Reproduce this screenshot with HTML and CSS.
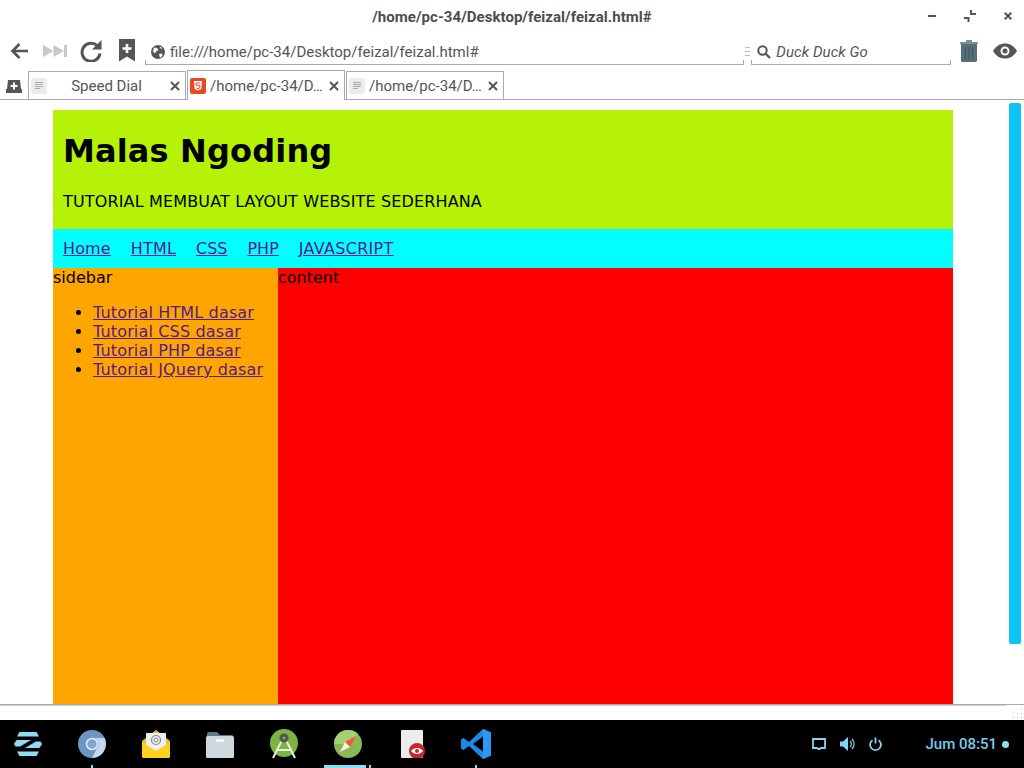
FILE: index.html
```html
<!DOCTYPE html>
<html lang="id">
<head>
<meta charset="utf-8">
<title>feizal</title>
<link rel="stylesheet" href="styles.css">
</head>
<body>
<div class="app">
  <div class="titlebar">
    <span class="title">/home/pc-34/Desktop/feizal/feizal.html#</span>
    <div class="winbtns">
      <svg class="wb w8" viewBox="0 0 8 12"><rect x="0" y="5" width="8" height="2" fill="#555"/></svg>
      <svg class="wb" viewBox="0 0 12 12"><path d="M6 0h2v3h4v2H6zM0 7h5.500v5h-2V9H0z" fill="#555"/></svg>
      <svg class="wb w8" viewBox="0 0 8 12"><path d="M.7 2.700l6.600 6.600M7.300 2.700L.7 9.300" stroke="#555" stroke-width="2"/></svg>
    </div>
  </div>
  <div class="toolbar">
    <svg class="tool back" viewBox="0 0 18 18"><path d="M18 9H3M9.500 2L2.500 9l7 7" fill="none" stroke="#555" stroke-width="2.700"/></svg>
    <svg class="tool ffw" viewBox="0 0 24 12"><path d="M0 0l10.500 6L0 12zM10.500 0L21 6l-10.500 6z" fill="#c8c8c8"/><rect x="21" y="0" width="3" height="12" fill="#c8c8c8"/></svg>
    <svg class="tool reload" viewBox="0 0 22 22"><path d="M17.500 6A9 9 0 1 0 20 13.500" fill="none" stroke="#555" stroke-width="3"/><path d="M21.500 0v9.500H12z" fill="#555"/></svg>
    <svg class="tool mark" viewBox="0 0 16 23"><path d="M0 0h16v22.500l-8-5-8 5z" fill="#555"/><path d="M6.700 5h2.600v3.200h3.200v2.600H9.300V14H6.700v-3.200H3.500V8.200h3.200z" fill="#fff"/></svg>
    <div class="addr field">
      <svg class="globe" viewBox="0 0 14 14"><circle cx="7" cy="7" r="7" fill="#555"/><path d="M3 2.500l3 .5 1.500 2-2.500 1.500-1 2L2 6.500zM8 9l3-.5.500 2L9 13zM8.500 1.500l3 1.500-1.500 1z" fill="#fff"/></svg>
      <span class="url">file:///home/pc-34/Desktop/feizal/feizal.html#</span>
    </div>
    <svg class="grip" viewBox="0 0 5 9"><path d="M0 .5h5M0 4.500h5M0 8.500h5" stroke="#bbb"/></svg>
    <div class="search field">
      <svg class="lens" viewBox="0 0 14 14"><circle cx="5.500" cy="5.500" r="4.200" fill="none" stroke="#555" stroke-width="2"/><path d="M8.500 8.500l4.500 4.500" stroke="#555" stroke-width="2.200"/></svg>
      <span class="engine">Duck Duck Go</span>
    </div>
    <svg class="trash" viewBox="0 0 18 22"><path d="M0 2h18v2H0zM6 0h6v2H6z" fill="#78909c"/><path d="M1 4h16v17l-1 1H2l-1-1z" fill="#546e7a"/><path d="M5.500 7v12M9 7v12M12.500 7v12" stroke="#455a64" stroke-width="1.300"/></svg>
    <svg class="eye" viewBox="0 0 24 16"><path d="M0 8C3 3 7 .500 12 .500S21 3 24 8c-3 5-7 7.500-12 7.500S3 13 0 8z" fill="#555"/><circle cx="12" cy="8" r="4.500" fill="#fff"/><circle cx="12" cy="8" r="2.500" fill="#555"/></svg>
  </div>
  <div class="tabbar">
    <svg class="newtab" viewBox="0 0 16 13"><path d="M2 0h12l1 9h1v4H0V9h1z" fill="#555"/><path d="M7 2.500h2v2.500h2.500v2H9v2.500H7V7H4.500V5H7z" fill="#fff"/></svg>
    <div class="tab">
      <svg class="fav" viewBox="0 0 16 16"><rect width="16" height="16" rx="2" fill="#ececec"/><path d="M4 4.500h8M4 6.500h8M4 8.500h8M4 10.500h5" stroke="#aaa"/></svg>
      <span class="tabname speed">Speed Dial</span>
      <svg class="x" viewBox="0 0 10 10"><path d="M1 1l8 8M9 1L1 9" stroke="#555" stroke-width="2"/></svg>
    </div>
    <div class="tab active">
      <svg class="fav" viewBox="0 0 16 16"><rect width="16" height="16" rx="2" fill="#e8491f"/><path d="M4 3h8l-.7 8L8 12.500 4.700 11z" fill="#fff"/><path d="M10.300 5H5.900l.2 2.300h3.900l-.3 2.700L8 10.600 6.300 10" fill="none" stroke="#e8491f"/></svg>
      <span class="tabname">/home/pc-34/D…</span>
      <svg class="x" viewBox="0 0 10 10"><path d="M1 1l8 8M9 1L1 9" stroke="#555" stroke-width="2"/></svg>
    </div>
    <div class="tab">
      <svg class="fav" viewBox="0 0 16 16"><rect width="16" height="16" rx="2" fill="#ececec"/><path d="M4 4.500h8M4 6.500h8M4 8.500h8M4 10.500h5" stroke="#aaa"/></svg>
      <span class="tabname">/home/pc-34/D…</span>
      <svg class="x" viewBox="0 0 10 10"><path d="M1 1l8 8M9 1L1 9" stroke="#555" stroke-width="2"/></svg>
    </div>
  </div>
  <div class="viewport">
    <div class="page">
      <div class="wrap">
        <header class="head">
          <h1>Malas Ngoding</h1>
          <p>TUTORIAL MEMBUAT LAYOUT WEBSITE SEDERHANA</p>
        </header>
        <nav class="menu">
          <a href="#">Home</a><a href="#">HTML</a><a class="tight" href="#">CSS</a><a class="tight" href="#">PHP</a><a class="wide" href="#">JAVASCRIPT</a>
        </nav>
        <div class="cols">
          <aside class="side">
            sidebar
            <ul>
              <li><a href="#">Tutorial HTML dasar</a></li>
              <li><a href="#">Tutorial CSS dasar</a></li>
              <li><a href="#">Tutorial PHP dasar</a></li>
              <li><a href="#">Tutorial JQuery dasar</a></li>
            </ul>
          </aside>
          <main class="content">content</main>
        </div>
      </div>
    </div>
    <div class="scroll"><div class="thumb"></div></div>
  </div>
  <div class="status">
    <div class="statusline"></div>
    <svg class="sgrip" viewBox="0 0 10 10"><path d="M9 1h1v1H9zM5 5h1v1H5zM9 5h1v1H9zM1 9h1v1H1zM5 9h1v1H5zM9 9h1v1H9z" fill="#bbb"/></svg>
  </div>
  <div class="taskbar">
    <div class="task t1"><svg viewBox="0 0 28 24"><path d="M5.500 0h17L25 4.500H3zM0 12l2.500-4H17L6 14.500H1.500zM28 12l-2.500 4H11l11-6.500h4.500zM3 19.500h22L22.500 24h-17z" fill="#8fdcf5"/></svg></div>
    <div class="task t2"><svg viewBox="0 0 28 28"><circle cx="14" cy="14" r="14" fill="#6c97c4"/><path d="M14 8h12.500A14 14 0 0 1 14 28l5-10a6 6 0 0 0-5-10z" fill="#c5d9ee"/><circle cx="14" cy="14" r="5.500" fill="#7ba6d8" stroke="#e6eef8" stroke-width="1.500"/></svg><i class="dot"></i></div>
    <div class="task t3"><svg viewBox="0 0 28 28"><path d="M14 0l14 11v15a2 2 0 0 1-2 2H2a2 2 0 0 1-2-2V11z" fill="#f6bf26"/><path d="M4 3h20v15l-10 6-10-6z" fill="#eceff1"/><circle cx="14" cy="10" r="4.500" fill="none" stroke="#888" stroke-width="1.200"/><circle cx="14" cy="10" r="2" fill="none" stroke="#888"/><path d="M0 12l14 9 14-9v14a2 2 0 0 1-2 2H2a2 2 0 0 1-2-2z" fill="#fcd221"/></svg></div>
    <div class="task t4"><svg viewBox="0 0 28 28"><path d="M1 4a2 2 0 0 1 2-2h8l3 3h12a1 1 0 0 1 1 1v5H1z" fill="#5d7a88"/><rect y="6" width="28" height="22" rx="1.500" fill="#cfd8dc"/><rect x="10" y="9.500" width="8" height="2" fill="#fff"/></svg></div>
    <div class="task t5"><svg viewBox="0 0 28 30"><circle cx="14" cy="14" r="14" fill="#7cb342"/><path d="M3 29L12 11M25 29L16 11M7 21h14" fill="none" stroke="#e8f0dc" stroke-width="2"/><circle cx="14" cy="9" r="4.500" fill="#555"/><circle cx="14" cy="9" r="1.500" fill="#7cb342"/></svg></div>
    <div class="task t6"><svg viewBox="0 0 28 28"><circle cx="14" cy="14" r="14" fill="#8bb854"/><path d="M0 14A14 14 0 0 1 14 0a14 14 0 0 1 10 4L14 14z" fill="#a5cf70"/><path d="M22 6L16 17l-5-5z" fill="#f4573d"/><path d="M6 22l5-10 5 5z" fill="#f3f3f3"/></svg><i class="running"></i><i class="tick"></i></div>
    <div class="task t7"><svg viewBox="0 0 24 28"><rect x="0" y="0" width="22" height="28" rx="1" fill="#ececec"/><circle cx="16" cy="21" r="8" fill="#c62828"/><path d="M10 21c3-4 9-4 12 0-3 4-9 4-12 0z" fill="#fff"/><circle cx="16" cy="21" r="2" fill="#c62828"/></svg></div>
    <div class="task t8"><svg viewBox="0 0 30 30"><path d="M22 0l8 3.500v23L22 30 8 17l-5.500 4L0 19.500V10.500L2.500 9 8 13z" fill="#1e88e5"/><path d="M22 7.500L12 15l10 7.500z" fill="#000"/><path d="M22 0l8 3.500v23L22 30z" fill="#2a9af0"/></svg><i class="dot"></i></div>
    <div class="tray">
      <svg class="ti tscreen" viewBox="0 0 14 12"><path d="M1 1h12v9H9l-1.500 1h-1L5 10H1z" fill="none" stroke="#87d4f2" stroke-width="1.800"/></svg>
      <svg class="ti tsound" viewBox="0 0 16 14"><path d="M0 4.500h3L8 0v14L3 9.500H0z" fill="#87d4f2"/><path d="M10 4a4 4 0 0 1 0 6M12 2a7 7 0 0 1 0 10" fill="none" stroke="#87d4f2" stroke-width="1.200"/></svg>
      <svg class="ti tpower" viewBox="0 0 13 14"><path d="M3.500 3.200a5.400 5.400 0 1 0 6 0" fill="none" stroke="#87d4f2" stroke-width="1.800"/><path d="M6.500 .500v6" stroke="#87d4f2" stroke-width="1.800"/></svg>
      <span class="clock">Jum 08:51</span>
      <i class="cdot"></i>
    </div>
  </div>
</div>
</body>
</html>
```
FILE: styles.css
```css
* { box-sizing: border-box; }
html, body { margin: 0; height: 100%; overflow: hidden; background: #fff; }
.app { display: flex; flex-direction: column; width: 1024px; height: 768px; font-family: Roboto, sans-serif; color: #555; }
svg { display: block; flex: none; }

.titlebar { display: flex; height: 34px; align-items: center; justify-content: center; position: relative; flex: none; }
.title { font-size: 15px; font-weight: 700; color: #4d4d4d; letter-spacing: .04px; }
.winbtns { position: absolute; right: 12px; top: 10px; display: flex; gap: 28px; align-items: center; }
.wb { width: 12px; height: 12px; }
.wb.w8 { width: 8px; }

.toolbar { display: flex; height: 34px; flex: none; align-items: center; padding: 0 7px 0 10px; }
.tool.back { width: 18px; height: 18px; margin-right: 15px; }
.tool.ffw { width: 24px; height: 12px; margin-right: 13px; }
.tool.reload { width: 22px; height: 22px; margin-right: 17px; }
.tool.mark { width: 16px; height: 23px; margin: -1px 10px 0 0; }
.field { display: flex; align-items: center; height: 30px; padding-top: 4px; border: solid #aaa; border-width: 0 0 1px; position: relative; margin-top: -2px; }
.field::before, .field::after { content: ""; position: absolute; bottom: 0; width: 1px; height: 4px; background: #aaa; }
.field::before { left: 0; }
.field::after { right: 0; }
.addr { width: 600px; padding-left: 6px; gap: 5px; }
.globe { width: 14px; height: 14px; }
.url { font-size: 15px; color: #555; }
.grip { width: 5px; height: 9px; margin: 0 1px; }
.search { width: 200px; padding-left: 6px; gap: 5px; }
.lens { width: 14px; height: 14px; }
.engine { font-size: 15px; font-style: italic; color: #555; letter-spacing: .08px; }
.trash { width: 18px; height: 22px; margin-left: 9px; }
.eye { width: 24px; height: 16px; margin-left: 15px; }

.tabbar { display: flex; height: 32px; flex: none; align-items: flex-end; padding-left: 6px; border-bottom: 1px solid #aaa; gap: 1px; }
.newtab { width: 16px; height: 13px; margin: 0 5px 6px 0; }
.tab { display: flex; align-items: center; width: 158px; height: 29px; border: 1px solid #aaa; border-bottom: 0; padding: 0 4px 0 2px; font-size: 15px; color: #555; margin-bottom: -1px; }
.tab.active { height: 30px; background: #fff; padding-top: 1px; z-index: 1; }
.fav { width: 16px; height: 16px; margin-right: 4px; }
.tabname { flex: 1; white-space: nowrap; }
.tabname.speed { text-align: center; padding-right: 8px; }
.x { width: 10px; height: 10px; margin-right: 1px; }

.viewport { display: flex; height: 604px; flex: none; overflow: hidden; }
.page { flex: 1; padding-top: 10px; overflow: hidden; font: 16px "DejaVu Sans", sans-serif; color: #000; }
.wrap { width: 900px; margin-left: 53px; }
.head { background: #b5f207; height: 119px; padding: 1px 10px; overflow: hidden; }
.head h1 { font-size: 32px; margin: 21px 0; line-height: 38px; letter-spacing: .15px; }
.head p { margin: 0; line-height: 19px; padding-top: 1px; letter-spacing: .15px; }
.menu { background: #0ff; height: 39px; display: flex; gap: 20px; padding: 10px; line-height: 19px; }
a { color: #551a8b; letter-spacing: .15px; }
a.wide { letter-spacing: .3px; }
a.tight { letter-spacing: 0; }
.cols { display: flex; height: 600px; line-height: 19px; }
.side { width: 225px; background: orange; }
.side ul { margin: 16px 0; padding-left: 40px; }
.content { width: 675px; background: red; }
.scroll { width: 17px; flex: none; padding: 3px 3px 0 2px; }
.thumb { width: 12px; height: 541px; background: #0cc3f5; border-radius: 2px; }

.status { height: 16px; flex: none; border-top: 1px solid #aaa; display: flex; flex-direction: column; }
.statusline { height: 1px; width: 1006px; background: #ccc; flex: none; }
.sgrip { width: 10px; height: 10px; align-self: flex-end; margin: 2px 2px 0 0; }

.taskbar { display: flex; height: 48px; flex: none; background: #000; position: relative; align-items: center; }
.task { position: absolute; top: 10px; display: block; }
.task svg { width: 28px; height: 28px; }
.t1 { left: 14px; top: 12px; } .t1 svg { height: 24px; }
.t2 { left: 78px; }
.t3 { left: 142px; }
.t4 { left: 206px; }
.t5 { left: 270px; top: 9px; } .t5 svg { height: 30px; }
.t6 { left: 334px; }
.t7 { left: 401px; } .t7 svg { width: 24px; }
.t8 { left: 461px; top: 9px; } .t8 svg { width: 30px; height: 30px; }
.dot { position: absolute; left: 13px; top: 35px; width: 2px; height: 3px; background: #8fdcf5; }
.t8 .dot { left: 14px; top: 36px; }
.running { position: absolute; left: -10px; top: 35px; width: 42px; height: 3px; background: #8fdcf5; }
.tick { position: absolute; left: 35px; top: 35px; width: 2px; height: 3px; background: #8fdcf5; }
.tray { margin-left: auto; display: flex; align-items: center; padding-right: 15px; height: 100%; }
.ti { height: 14px; }
.tscreen { width: 14px; height: 12px; margin-right: 14px; }
.tsound { width: 16px; margin-right: 13px; }
.tpower { width: 13px; margin-right: 43px; }
.clock { font-size: 15px; font-weight: 500; color: #79c9ec; }
.cdot { width: 7px; height: 7px; border-radius: 50%; background: #8fdcf5; margin-left: 5px; }
```
